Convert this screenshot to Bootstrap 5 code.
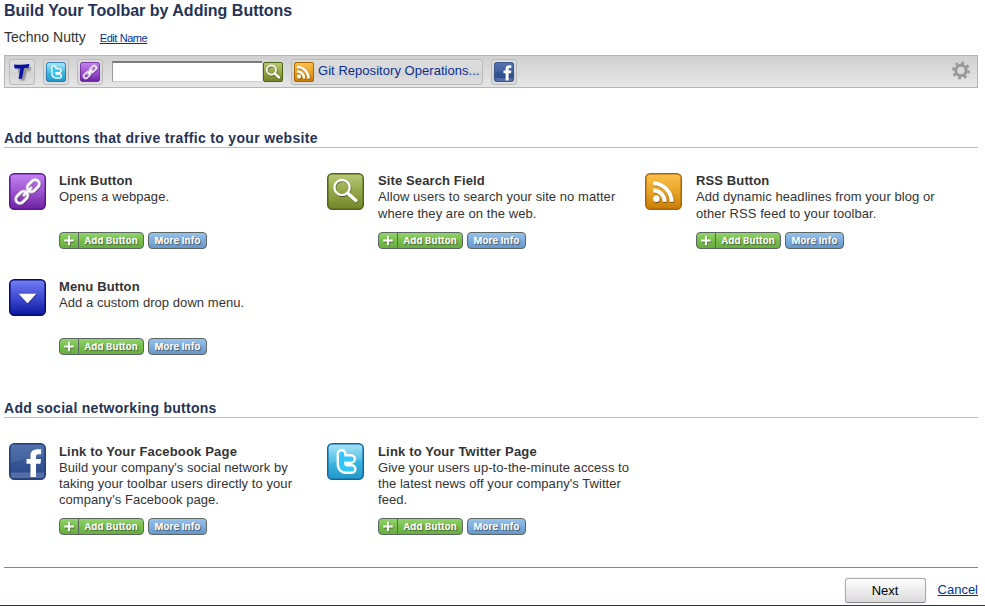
<!DOCTYPE html>
<html lang="en">
<head>
<meta charset="utf-8">
<meta name="viewport" content="width=device-width, initial-scale=1">
<title>Build Your Toolbar</title>
<link href="https://cdn.jsdelivr.net/npm/bootstrap@5.3.0/dist/css/bootstrap.min.css" rel="stylesheet">
<style>
body{font-family:"Liberation Sans",Arial,sans-serif;font-size:13px;line-height:16px;color:#333;background:#fff;height:606px;overflow:hidden}
a{color:#039}
.page{height:606px;padding:1px 7px 0 4px;border-bottom:1px solid #26384a}
h1{font-size:16px;line-height:20px;font-weight:700;color:#253358;letter-spacing:0}
.toolbar-name{height:22px;margin-top:6px;font-size:14px;line-height:20px}
.edit-link{font-size:11px;margin-left:14px;line-height:22px;letter-spacing:-.42px}
.toolbar-strip{height:33px;margin-top:6px;padding:0 5px 0 4px;border:1px solid #b5b5b5;background:linear-gradient(#d0d0d0,#e6e6e6)}
.tool{height:26px;min-width:26px;padding:2px;border:1px solid #bbb;border-radius:3px;background:linear-gradient(#dcdcdc,#d9d9d9 50%,#d3d3d3 51%,#dedede);margin-right:8px;color:#0a2f94;font-size:13px;letter-spacing:.04px}
.rss-tool{width:192px}
.rss-tool span{line-height:18px;margin-top:-2px}
.tool-icon{width:20px;height:20px;flex:none}
.search-icon{margin-left:1px}
.field{width:150px;height:21px;border:1px solid #ccc;border-top:2px solid #7a7a7a;border-left-color:#999;border-right:0;border-radius:0;background:#fff;margin-left:1px;padding:0}
.traffic{margin-top:41px;height:270px}
.section-title{font-size:14px;line-height:18px;font-weight:700;color:#253358;height:19px;border-bottom:1px solid #bcbcbc;letter-spacing:.33px}
.social .section-title{letter-spacing:.28px}
.items{padding:25px 0 0 5px}
.item{width:318px}
.item-icon{width:37px;height:37px;flex:none;margin-right:13px}
.item + .item .item-icon{margin-right:14px}
.item.first-in-row .item-icon{margin-right:13px}
.item h3{font-size:13px;line-height:16px;font-weight:700;letter-spacing:.17px}
.traffic h3{letter-spacing:.12px}
.item p{letter-spacing:.06px;white-space:nowrap}
.traffic .item{height:106px}
.traffic .copy{height:59px}
.traffic p{line-height:17px;position:relative;top:-1px}
.social .copy{height:75px;padding-top:1px}
.pill{height:17px;border:1px solid #5d6761;border-radius:4px;padding:0;font-family:Inter,"Liberation Sans",sans-serif;font-size:9.5px;font-weight:700;line-height:15px;letter-spacing:.2px;color:#fff;text-shadow:1px 1px 1px #333a;overflow:hidden}
.pill-add{width:85px;background:linear-gradient(#92d36e,#78bf4c 48%,#69ad40);margin-right:4px}
.pill-info{width:59px;background:linear-gradient(#98c0eb,#7eadde 50%,#6796c9)}
.plus{width:19px;height:15px;border-right:1px solid #5d6761;flex:none}
.footer-bar{border-top:1px solid #888;height:38px;padding-top:10px}
.next{width:81px;height:25px;border:1px solid #aaa;border-bottom-color:#888;border-radius:3px;background:linear-gradient(#fefefe,#ececec 50%,#dadada);font-size:13px;line-height:23px;padding:0;color:#000;margin-right:12px;box-shadow:0 0 1px #999}
.cancel{line-height:23px}
</style>
<script src="https://cdn.jsdelivr.net/npm/bootstrap@5.3.0/dist/js/bootstrap.bundle.min.js"></script>
</head>
<body>
<svg width="0" height="0" class="position-absolute" aria-hidden="true">
<defs>
<linearGradient id="g-link" x2="0" y2="1"><stop stop-color="#c384f2"/><stop offset=".5" stop-color="#9d55d0"/><stop offset="1" stop-color="#6d20a0"/></linearGradient>
<linearGradient id="g-search" x2="0" y2="1"><stop stop-color="#b9c976"/><stop offset=".5" stop-color="#93a749"/><stop offset="1" stop-color="#738528"/></linearGradient>
<linearGradient id="g-rss" x2="0" y2="1"><stop stop-color="#fcc14d"/><stop offset=".5" stop-color="#e8a327"/><stop offset="1" stop-color="#c87c06"/></linearGradient>
<linearGradient id="g-menu" x2="0" y2="1"><stop stop-color="#7480f5"/><stop offset=".45" stop-color="#4450d5"/><stop offset="1" stop-color="#0c18a0"/></linearGradient>
<linearGradient id="g-fb" x2="0" y2="1"><stop stop-color="#4668a8"/><stop offset=".5" stop-color="#365695"/><stop offset="1" stop-color="#2a4788"/></linearGradient>
<linearGradient id="g-tw" x2="0" y2="1"><stop stop-color="#a0e2fa"/><stop offset=".45" stop-color="#42b9e0"/><stop offset="1" stop-color="#2298c8"/></linearGradient>
<filter id="soft" x="-20%" y="-20%" width="150%" height="150%"><feDropShadow dx=".6" dy="1" stdDeviation=".7" flood-opacity=".5"/></filter>
</defs>
<symbol id="i-link" viewBox="0 0 37 37"><rect x=".75" y=".75" width="35.5" height="35.5" rx="4.5" fill="url(#g-link)" stroke="#5d1592" stroke-width="1.5"/><g transform="rotate(-45 18.5 18.5)" fill="none" stroke="#fff" stroke-width="2.7" stroke-linecap="round" filter="url(#soft)"><rect x="3.6" y="14.4" width="13.6" height="8.2" rx="4.1"/><rect x="19.8" y="14.4" width="13.6" height="8.2" rx="4.1"/><path d="M13.3 18.5h10.4"/></g></symbol>
<symbol id="i-search" viewBox="0 0 37 37"><rect x=".75" y=".75" width="35.5" height="35.5" rx="4.5" fill="url(#g-search)" stroke="#4d6516" stroke-width="1.5"/><g fill="none" stroke="#fff" filter="url(#soft)"><circle cx="15" cy="14.4" r="7.6" stroke-width="2.2"/><path d="M20.5 20l8.4 7.5" stroke-width="3.1" stroke-linecap="round"/></g></symbol>
<symbol id="i-search-small" viewBox="0 0 20 20"><rect x=".5" y=".5" width="19" height="19" rx="1.5" fill="url(#g-search)" stroke="#4d6516"/><g fill="none" stroke="#fff" filter="url(#soft)"><circle cx="8.4" cy="8" r="4.6" stroke-width="1.6"/><path d="M11.8 11.5l4.2 3.9" stroke-width="2.2" stroke-linecap="round"/></g></symbol>
<symbol id="i-rss" viewBox="0 0 37 37"><rect x=".75" y=".75" width="35.5" height="35.5" rx="4.5" fill="url(#g-rss)" stroke="#aa6503" stroke-width="1.5"/><g fill="none" stroke="#fff" stroke-width="3.8" filter="url(#soft)"><path d="M8.2 17.3A11.5 11.5 0 0 1 19.7 28.8M8.2 10.4A18.4 18.4 0 0 1 26.6 28.8"/><circle cx="11.3" cy="25.7" r="3.2" fill="#fff" stroke="none"/></g></symbol>
<symbol id="i-rss-small" viewBox="0 0 20 20"><rect x=".5" y=".5" width="19" height="19" rx="1.5" fill="url(#g-rss)" stroke="#aa6503"/><g fill="none" stroke="#fff" stroke-width="2.3" filter="url(#soft)"><path d="M3 9.3A7.2 7.2 0 0 1 10.2 16.5M3 4.9A11.6 11.6 0 0 1 14.6 16.5"/><circle cx="5" cy="14.6" r="2" fill="#fff" stroke="none"/></g></symbol>
<symbol id="i-menu" viewBox="0 0 37 37"><rect x=".75" y=".75" width="35.5" height="35.5" rx="4.5" fill="url(#g-menu)" stroke="#040c70" stroke-width="1.5"/><path d="M9.7 14.8h17.6l-8.8 9.4z" fill="#fff" filter="url(#soft)"/></symbol>
<symbol id="i-fb" viewBox="0 0 37 37"><rect x=".75" y=".75" width="35.5" height="35.5" rx="4.5" fill="url(#g-fb)" stroke="#24417b" stroke-width="1.5"/><path d="M2 2h33v12Q17 15 2 20z" fill="#fff" opacity=".07"/><path d="M2 29.5h33V33q0 2-2 2H4q-2 0-2-2z" fill="#6f86b8" opacity=".6"/><path d="M21.5 34V20.8h-4v-4.9h4v-3.2c0-5 3-7 10.6-6.4v4.9h-2.6c-2 0-2.5.8-2.5 2.5v2.2h5.1l-.7 4.9H27V34z" fill="#fff"/></symbol>
<symbol id="i-tw" viewBox="0 0 37 37"><rect x=".75" y=".75" width="35.5" height="35.5" rx="4.5" fill="url(#g-tw)" stroke="#0b66ad" stroke-width="1.5"/><path d="M2 3h33v14Q19 15 2 21z" fill="#fff" opacity=".13"/><g fill="none" stroke-linecap="round" stroke-linejoin="round"><path d="M14.6 11v10c0 3.6 1.8 5 5 5h5M14.6 16h9.4" stroke="#fff" stroke-width="10"/><path d="M14.6 11v10c0 3.6 1.8 5 5 5h5M14.6 16h9.4" stroke="#33c6fa" stroke-width="5.2"/></g></symbol>
</svg>
<main class="page d-flex flex-column">
<h1 class="m-0">Build Your Toolbar by Adding Buttons</h1>
<div class="toolbar-name d-flex"><span>Techno Nutty</span><a class="edit-link" href="#">Edit Name</a></div>
<div class="toolbar-strip d-flex align-items-center">
<div class="tool d-flex"><svg class="tool-icon" viewBox="0 0 20 20"><path d="M5 5.4q7 .6 14-.7l-1 3.6-3.4.4-2.2 9-3.6.8z" fill="#222" opacity=".35" filter="url(#soft)"/><path d="M2 2.5q8 .7 15.5-.4l-.9 3.6-4.6.5-2 10.2-3.4.5 1.8-10.3-5.8-.2z" fill="#0712a5"/></svg></div>
<div class="tool d-flex"><svg class="tool-icon"><use href="#i-tw"/></svg></div>
<div class="tool d-flex"><svg class="tool-icon"><use href="#i-link"/></svg></div>
<input class="field" type="text" aria-label="Search"><svg class="tool-icon search-icon me-2"><use href="#i-search-small"/></svg>
<div class="tool rss-tool d-flex align-items-center"><svg class="tool-icon"><use href="#i-rss-small"/></svg><span class="ps-1 text-nowrap">Git Repository Operations...</span></div>
<div class="tool d-flex"><svg class="tool-icon"><use href="#i-fb"/></svg></div>
<svg class="ms-auto" width="22" height="22" viewBox="0 0 22 22" fill="none" stroke="#999"><circle cx="11" cy="9.5" r="5.2" stroke-width="3"/><circle cx="11" cy="9.5" r="7.7" stroke-width="2.6" stroke-dasharray="2.9 3.148"/></svg>
</div>

<section class="traffic">
<h2 class="section-title mb-0">Add buttons that drive traffic to your website</h2>
<div class="items d-flex flex-wrap">
<article class="item d-flex"><svg class="item-icon"><use href="#i-link"/></svg><div><div class="copy"><h3 class="m-0">Link Button</h3><p class="m-0">Opens a webpage.</p></div><div class="d-flex"><button class="pill pill-add d-flex"><svg class="plus" viewBox="0 0 19 15"><path d="M9.5 3v10M4.5 8h10" stroke="#333" opacity=".35" stroke-width="2.5" transform="translate(.8 .8)"/><path d="M9.5 2.5v10M4.5 7.5h10" stroke="#fff" stroke-width="2"/></svg><span class="flex-fill text-center">Add Button</span></button><button class="pill pill-info">More Info</button></div></div></article>
<article class="item d-flex"><svg class="item-icon"><use href="#i-search"/></svg><div><div class="copy"><h3 class="m-0">Site Search Field</h3><p class="m-0">Allow users to search your site no matter<br>where they are on the web.</p></div><div class="d-flex"><button class="pill pill-add d-flex"><svg class="plus" viewBox="0 0 19 15"><path d="M9.5 3v10M4.5 8h10" stroke="#333" opacity=".35" stroke-width="2.5" transform="translate(.8 .8)"/><path d="M9.5 2.5v10M4.5 7.5h10" stroke="#fff" stroke-width="2"/></svg><span class="flex-fill text-center">Add Button</span></button><button class="pill pill-info">More Info</button></div></div></article>
<article class="item d-flex"><svg class="item-icon"><use href="#i-rss"/></svg><div><div class="copy"><h3 class="m-0">RSS Button</h3><p class="m-0">Add dynamic headlines from your blog or<br>other RSS feed to your toolbar.</p></div><div class="d-flex"><button class="pill pill-add d-flex"><svg class="plus" viewBox="0 0 19 15"><path d="M9.5 3v10M4.5 8h10" stroke="#333" opacity=".35" stroke-width="2.5" transform="translate(.8 .8)"/><path d="M9.5 2.5v10M4.5 7.5h10" stroke="#fff" stroke-width="2"/></svg><span class="flex-fill text-center">Add Button</span></button><button class="pill pill-info">More Info</button></div></div></article>
<article class="item first-in-row d-flex"><svg class="item-icon"><use href="#i-menu"/></svg><div><div class="copy"><h3 class="m-0">Menu Button</h3><p class="m-0">Add a custom drop down menu.</p></div><div class="d-flex"><button class="pill pill-add d-flex"><svg class="plus" viewBox="0 0 19 15"><path d="M9.5 3v10M4.5 8h10" stroke="#333" opacity=".35" stroke-width="2.5" transform="translate(.8 .8)"/><path d="M9.5 2.5v10M4.5 7.5h10" stroke="#fff" stroke-width="2"/></svg><span class="flex-fill text-center">Add Button</span></button><button class="pill pill-info">More Info</button></div></div></article>
</div>
</section>

<section class="social">
<h2 class="section-title mb-0">Add social networking buttons</h2>
<div class="items d-flex">
<article class="item d-flex"><svg class="item-icon"><use href="#i-fb"/></svg><div><div class="copy"><h3 class="m-0">Link to Your Facebook Page</h3><p class="m-0">Build your company's social network by<br>taking your toolbar users directly to your<br>company's Facebook page.</p></div><div class="d-flex"><button class="pill pill-add d-flex"><svg class="plus" viewBox="0 0 19 15"><path d="M9.5 3v10M4.5 8h10" stroke="#333" opacity=".35" stroke-width="2.5" transform="translate(.8 .8)"/><path d="M9.5 2.5v10M4.5 7.5h10" stroke="#fff" stroke-width="2"/></svg><span class="flex-fill text-center">Add Button</span></button><button class="pill pill-info">More Info</button></div></div></article>
<article class="item d-flex"><svg class="item-icon"><use href="#i-tw"/></svg><div><div class="copy"><h3 class="m-0">Link to Your Twitter Page</h3><p class="m-0">Give your users up-to-the-minute access to<br>the latest news off your company's Twitter<br>feed.</p></div><div class="d-flex"><button class="pill pill-add d-flex"><svg class="plus" viewBox="0 0 19 15"><path d="M9.5 3v10M4.5 8h10" stroke="#333" opacity=".35" stroke-width="2.5" transform="translate(.8 .8)"/><path d="M9.5 2.5v10M4.5 7.5h10" stroke="#fff" stroke-width="2"/></svg><span class="flex-fill text-center">Add Button</span></button><button class="pill pill-info">More Info</button></div></div></article>
</div>
</section>
<footer class="footer-bar d-flex justify-content-end mt-auto"><button class="next">Next</button><a class="cancel" href="#">Cancel</a></footer>
</main>
</body>
</html>
